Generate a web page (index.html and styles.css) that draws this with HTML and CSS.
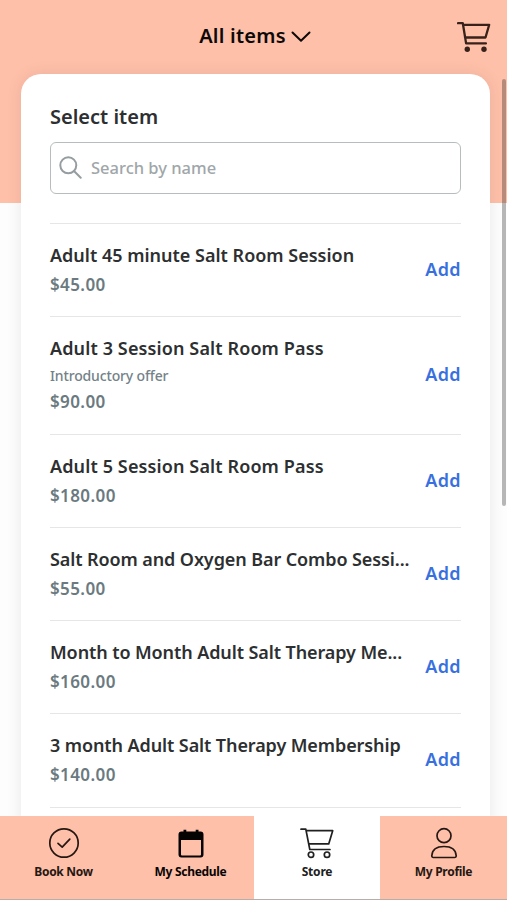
FILE: index.html
```html
<!DOCTYPE html>
<html lang="en">
<head>
<meta charset="utf-8">
<meta name="viewport" content="width=device-width, initial-scale=1">
<title>Store</title>
<link rel="stylesheet" href="styles.css">
</head>
<body>
<div class="app">
  <header class="topbar">
    <button class="filter"><span class="filter-label">All items</span>
      <svg class="chevron" width="20" height="12" viewBox="0 0 20 12"><path d="M1.5 1.500 10 9.700 18.500 1.500"/></svg>
    </button>
    <button class="cart" aria-label="Cart">
      <svg width="34" height="32" viewBox="0 0 34 32"><path d="M1 2.200h4.800l3.300 20.200h19.800M6.200 3.800h26l-3.700 12.700H8"/><circle class="dot" cx="10.3" cy="28.2" r="2.7"/><circle class="dot" cx="27" cy="28.2" r="2.7"/></svg>
    </button>
  </header>
  <main class="content">
    <section class="card">
      <h1 class="heading"><span>Select item</span></h1>
      <div class="search">
        <svg width="23" height="23" viewBox="0 0 23 23"><circle cx="9.3" cy="9.3" r="8"/><path d="m15 15 6.700 6.700"/></svg>
        <span class="placeholder">Search by name</span>
      </div>
      <ul class="items">
        <li class="item"><div class="info"><span class="name">Adult 45 minute Salt Room Session</span><span class="price">$45.00</span></div><a class="add">Add</a></li>
        <li class="item"><div class="info"><span class="name loose">Adult 3 Session Salt Room Pass</span><span class="note">Introductory offer</span><span class="price">$90.00</span></div><a class="add">Add</a></li>
        <li class="item"><div class="info"><span class="name loose">Adult 5 Session Salt Room Pass</span><span class="price">$180.00</span></div><a class="add">Add</a></li>
        <li class="item"><div class="info"><span class="name tight">Salt Room and Oxygen Bar Combo Sessi...</span><span class="price">$55.00</span></div><a class="add">Add</a></li>
        <li class="item"><div class="info"><span class="name tight">Month to Month Adult Salt Therapy Me...</span><span class="price">$160.00</span></div><a class="add">Add</a></li>
        <li class="item"><div class="info"><span class="name tight">3 month Adult Salt Therapy Membership</span><span class="price">$140.00</span></div><a class="add">Add</a></li>
        <li class="item"></li>
      </ul>
    </section>
  </main>
  <nav class="tabs">
    <a class="tab">
      <svg width="32" height="32" viewBox="0 0 32 32"><circle cx="16" cy="16" r="14.2"/><path d="m10 16.300 4.200 3.800 7.600-8"/></svg>
      <span>Book Now</span>
    </a>
    <a class="tab">
      <svg width="32" height="32" viewBox="0 0 32 32"><path class="solid" d="M6.500 4.500h2V2.700h2.800v1.800h9.400V2.700h2.800v1.800h2a3 3 0 0 1 3 3v20a3 3 0 0 1-3 3h-19a3 3 0 0 1-3-3v-20a3 3 0 0 1 3-3ZM6 13v14.500c0 .6.3.9.9.9h18.200c.6 0 .9-.3.9-.9V13Z"/></svg>
      <span>My Schedule</span>
    </a>
    <a class="tab active">
      <svg width="34" height="32" viewBox="0 0 34 32"><path d="M1 2.200h4.800l4 20.300H30M6.200 3.700h26.500l-4 13.200H8.800"/><circle cx="11" cy="27.7" r="2.7"/><circle cx="27" cy="27.7" r="2.7"/></svg>
      <span>Store</span>
    </a>
    <a class="tab">
      <svg width="32" height="32" viewBox="0 0 32 32"><circle cx="16" cy="8.7" r="7"/><path d="M5.400 30.500h21.200c1 0 1.700-.8 1.600-1.800-.4-5.700-4.700-9.200-12.200-9.200S4.200 23 3.800 28.700c-.1 1 .6 1.800 1.600 1.800Z"/></svg>
      <span>My Profile</span>
    </a>
  </nav>
  <div class="scrollbar"></div>
</div>
</body>
</html>
```
FILE: styles.css
```css
* { box-sizing: border-box; }
body { margin: 0; font-family: "Noto Sans", sans-serif; font-weight: 600; color: #2d2f31; }
button { border: 0; padding: 0; background: none; font: inherit; color: inherit; }
svg { display: block; fill: none; stroke: currentColor; stroke-linecap: round; stroke-linejoin: round; flex: none; }
.app { position: relative; height: 900px; display: flex; flex-direction: column; overflow: hidden; background: linear-gradient(#ffc0a9 203px, #fdfdfd 203px); }
.topbar { height: 74px; flex: none; display: grid; grid-template-columns: 1fr auto 1fr; align-items: center; padding: 0 16px; color: #16100e; }
.filter { grid-column: 2; display: flex; align-items: center; gap: 5px; padding: 0 0 2px 3px; font-size: 20px; line-height: 28px; letter-spacing: .25px; color: #0c0908; }
.chevron { stroke-width: 2; margin-top: 2px; }
.cart { justify-self: end; color: #38211a; }
.cart svg { stroke-width: 2.3; }
.dot, .solid { fill: currentColor; stroke: none; }
.content { flex: 1; min-height: 0; padding: 0 17px 0 21px; }
.card { height: 900px; padding: 27px 29px 0; background: #fff; border-radius: 20px 20px 0 0; box-shadow: 0 0 16px rgba(0, 0, 0, .09); }
.heading { margin: 0; font-size: 20px; line-height: 32px; font-weight: 600; }
.search { margin-top: 9px; height: 52px; display: flex; align-items: center; gap: 9px; padding: 0 8px 2px; border: 1.5px solid #b7bdbf; border-radius: 6px; color: #969da0; }
.search svg { stroke-width: 2; }
.placeholder { font-size: 16.5px; font-weight: 500; color: #a0a6a9; }
.items { list-style: none; margin: 29px 0 0; padding: 0; }
.item { display: flex; align-items: center; justify-content: space-between; padding: 17px 0 17.3px; border-top: 1px solid #e4e6e7; }
.info { display: flex; flex-direction: column; align-items: flex-start; white-space: nowrap; }
.name { font-size: 18px; line-height: 29px; }
.loose { letter-spacing: .12px; }
.tight { letter-spacing: -.1px; }
.price { font-size: 17px; line-height: 29px; letter-spacing: .4px; color: #6b7a80; }
.note { padding-top: 2px; font-size: 14px; line-height: 22px; font-weight: 500; letter-spacing: -.15px; color: #738288; }
.add { padding-bottom: 2px; font-size: 18px; line-height: 28px; letter-spacing: .4px; color: #3970df; }
.tabs { height: 84px; flex: none; display: grid; grid-template-columns: 127px 127px 126px 127px; position: relative; background: #ffc0a9; border-bottom: 1px solid #b9adaa; }
.tab { display: flex; flex-direction: column; align-items: center; padding-top: 11px; gap: 4px; font-size: 12px; line-height: 18px; font-weight: 700; letter-spacing: -.3px; color: #251712; }
.tab svg { stroke-width: 1.7; }
.tab:nth-child(2) { color: #060403; }
.tab.active { background: #fff; color: #202020; letter-spacing: -.2px; }
.scrollbar { position: absolute; right: 1px; top: 79px; width: 4px; height: 427px; border-radius: 2px; background: rgba(0, 0, 0, .28); }
```
